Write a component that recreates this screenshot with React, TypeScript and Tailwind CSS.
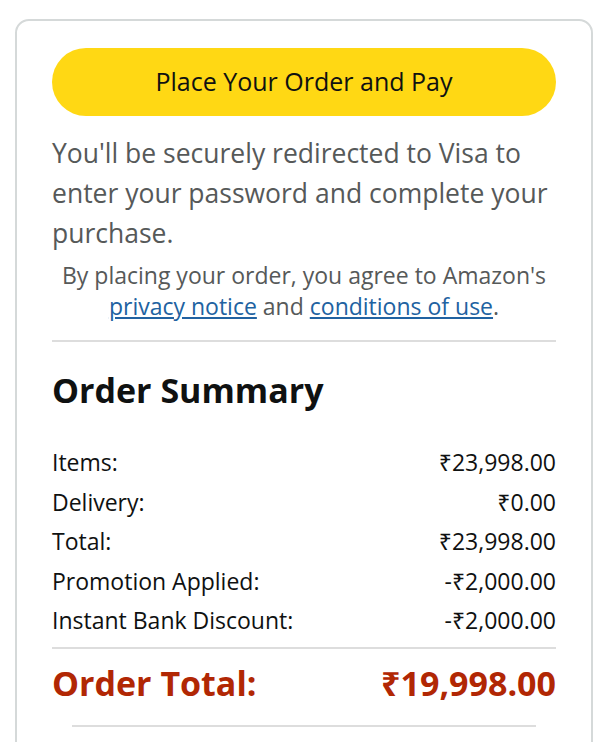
const font = { fontFamily: "'Open Sans', 'Noto Sans', sans-serif" };

type Row = { label: string; value: string };

const rows: Row[] = [
  { label: "Items:", value: "₹23,998.00" },
  { label: "Delivery:", value: "₹0.00" },
  { label: "Total:", value: "₹23,998.00" },
  { label: "Promotion Applied:", value: "-₹2,000.00" },
  { label: "Instant Bank Discount:", value: "-₹2,000.00" },
];

export default function App() {
  return (
    <div className="min-h-[742px] bg-white pt-[19px] pl-[15px] pr-[17px] overflow-hidden" style={font}>
      <div className="rounded-[14px] border-2 border-[#d5d9d9] px-[35px] pt-[27px] pb-[40px]">
        {/* Place order button */}
        <button className="flex h-[68px] w-full items-center justify-center rounded-full bg-[#ffd814] text-[25px] text-[#0f1111]">
          Place Your Order and Pay
        </button>

        <p className="mt-[17px] text-[26.5px] leading-[40px] text-[#565959]">
          You'll be securely redirected to Visa to enter your password and complete your purchase.
        </p>

        <p className="mt-[7px] text-center text-[23px] leading-[31px] text-[#565959]">
          By placing your order, you agree to Amazon's{" "}
          <a className="text-[#2162a1] underline">privacy notice</a> and{" "}
          <a className="text-[#2162a1] underline">conditions of use</a>.
        </p>

        <div className="mt-[18px] h-[2px] bg-[#dddddd]" />

        {/* Summary */}
        <h2 className="mt-[28px] text-[34px] font-bold leading-[40px] text-[#0f1111]">Order Summary</h2>

        <div className="mt-[33px] text-[23px] leading-[39.5px] text-[#0f1111]">
          {rows.map((r) => (
            <div key={r.label} className="flex justify-between">
              <span>{r.label}</span>
              <span>{r.value}</span>
            </div>
          ))}
        </div>

        <div className="mt-[6px] h-[2px] bg-[#dddddd]" />

        <div className="mt-[14px] flex justify-between text-[34px] font-bold leading-[40px] text-[#b12704]">
          <span>Order Total:</span>
          <span>₹19,998.00</span>
        </div>

        <div className="mx-[20px] mt-[22px] h-[2px] bg-[#dddddd]" />
      </div>
    </div>
  );
}
